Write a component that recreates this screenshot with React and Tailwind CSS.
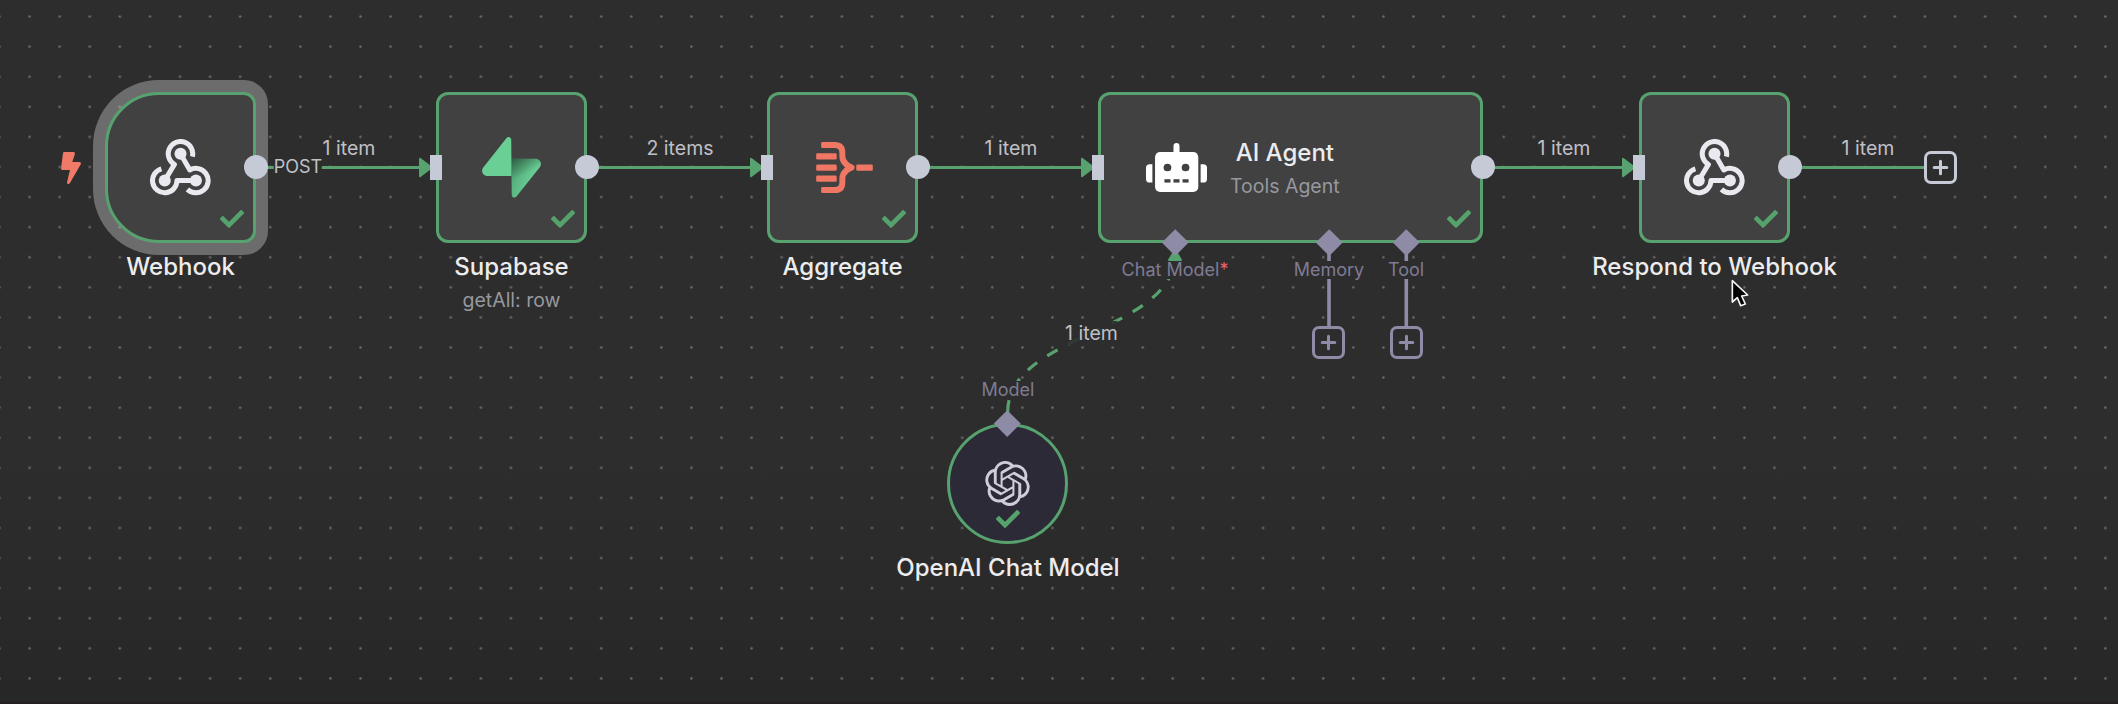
import { FaBolt, FaCheck } from "react-icons/fa";
import { SiOpenai } from "react-icons/si";

const GREEN = "#57a26e";

function Check({ className }) {
  return <FaCheck className={`absolute size-6 text-[#55a26c] ${className}`} />;
}

function OutputHandle() {
  return <span className="absolute top-[63px] -right-[11.5px] size-6 rounded-full bg-[#c6c9d6]" />;
}

function InputHandle() {
  return <span className="absolute top-[63px] -left-[6px] h-[25px] w-3 bg-[#c6c9d6]" />;
}

function Title({ children, className = "" }) {
  return (
    <div className={`text-2xl leading-[31px] font-medium whitespace-nowrap text-[#ececee] ${className}`}>
      {children}
    </div>
  );
}

function Node({ className, shape = "rounded-xl", width = "w-[151px]", title, subtitle, input = true, children }) {
  return (
    <div className={`absolute ${className} ${width}`}>
      <div className={`relative flex h-[151px] items-center justify-center border-[3px] border-[#57a26e] bg-[#414141] ${shape}`}>
        {children}
      </div>
      {input && <InputHandle />}
      <OutputHandle />
      <Check className="top-[115px] right-[12px]" />
      {title && (
        <div className="absolute top-[159px] left-1/2 flex -translate-x-1/2 flex-col items-center">
          <Title>{title}</Title>
          {subtitle && <div className="mt-[3px] text-[19.5px] leading-[30px] whitespace-nowrap text-[#97979f]">{subtitle}</div>}
        </div>
      )}
    </div>
  );
}

function WebhookIcon() {
  return (
    <svg viewBox="0 0 182 170" className="h-[57px] w-[61px]" fill="none" stroke="#e9e9ef" strokeWidth="15">
      <path d="M44 124 L72.8 75.6 A36.5 36.5 0 1 1 126.4 52.8" strokeLinejoin="round" />
      <path d="M91 44 L118.8 92.4 A36.5 36.5 0 1 1 111.6 150.3" strokeLinejoin="round" />
      <path d="M137 124 L80.5 124 A36.5 36.5 0 1 1 34 88.9" strokeLinejoin="round" />
      <g fill="#e9e9ef" stroke="none">
        <circle cx="91" cy="44" r="18" />
        <circle cx="44" cy="124" r="18" />
        <circle cx="137" cy="124" r="18" />
      </g>
    </svg>
  );
}

function SupabaseIcon() {
  return (
    <svg viewBox="0 0 109 113" className="h-[61px] w-[59px]">
      <defs>
        <linearGradient id="bolt" x1="54" y1="55" x2="94" y2="72" gradientUnits="userSpaceOnUse">
          <stop stopColor="#4fa374" />
          <stop offset="1" stopColor="#68cd93" />
        </linearGradient>
        <linearGradient id="fade" x1="48" y1="30" x2="70" y2="74" gradientUnits="userSpaceOnUse">
          <stop stopOpacity="0.55" />
          <stop offset="1" stopOpacity="0" />
        </linearGradient>
      </defs>
      <path fill="url(#bolt)" d="M63.7076 110.284C60.8481 113.885 55.0502 111.912 54.9813 107.314L53.9738 40.0627L99.1935 40.0627C107.384 40.0627 111.952 49.5228 106.859 55.9374L63.7076 110.284Z" />
      <path fill="url(#fade)" d="M63.7076 110.284C60.8481 113.885 55.0502 111.912 54.9813 107.314L53.9738 40.0627L99.1935 40.0627C107.384 40.0627 111.952 49.5228 106.859 55.9374L63.7076 110.284Z" />
      <path fill="#6acf94" d="M45.317 2.07103C48.1765 -1.53037 53.9745 0.442937 54.0434 5.041L54.4849 72.2922H9.83113C1.64038 72.2922 -2.92775 62.8321 2.1655 56.4175L45.317 2.07103Z" />
    </svg>
  );
}

function AggregateIcon() {
  return (
    <svg viewBox="0 0 171 154" className="ml-1 h-[51px] w-[57px]" fill="#ef7763">
      <rect x="0" y="34" width="62" height="19" rx="4" />
      <rect x="0" y="68" width="62" height="19" rx="4" />
      <rect x="0" y="101" width="62" height="19" rx="4" />
      <rect x="121" y="68" width="50" height="19" rx="4" />
      <path
        d="M19 9 H56 Q79 9 79 32 V44 Q79 57 91 68 Q98 73 107 77 Q98 81 91 86 Q79 97 79 110 V122 Q79 145 56 145 H19"
        fill="none"
        stroke="#ef7763"
        strokeWidth="18"
        strokeLinecap="butt"
        strokeLinejoin="round"
      />
      <rect x="15" y="0" width="12" height="18" rx="4" />
      <rect x="15" y="136" width="12" height="18" rx="4" />
    </svg>
  );
}

function RobotIcon() {
  return (
    <svg viewBox="0 0 182 146" className="h-[49px] w-[61px]" fill="#fff">
      <rect x="82" y="0" width="18" height="40" rx="9" />
      <rect x="27" y="27" width="129" height="119" rx="15" />
      <path d="M19 63 V118 H11 A11 11 0 0 1 0 107 V74 A11 11 0 0 1 11 63Z" />
      <path d="M163 63 V118 H171 A11 11 0 0 0 182 107 V74 A11 11 0 0 0 171 63Z" />
      <g fill="#414141">
        <circle cx="64" cy="73" r="11.5" />
        <circle cx="118" cy="73" r="11.5" />
        <rect x="55" y="108" width="18" height="10" />
        <rect x="82" y="108" width="18" height="10" />
        <rect x="109" y="108" width="18" height="10" />
      </g>
    </svg>
  );
}

function Diamond({ className }) {
  return <span className={`absolute size-[18.5px] rotate-45 bg-[#8d8ba5] ${className}`} />;
}

function EdgeLabel({ className, size = "text-[19.5px]", children }) {
  return (
    <span className={`absolute -translate-x-1/2 leading-6 whitespace-nowrap text-[#c0c0c7] ${size} ${className}`}>
      {children}
    </span>
  );
}

function PortLabel({ className, children }) {
  return (
    <span className={`absolute -translate-x-1/2 bg-[#2d2d2d] text-lg leading-[18px] whitespace-nowrap text-[#7f7b94] ${className}`}>
      {children}
    </span>
  );
}

function AddButton({ className }) {
  return (
    <button className={`absolute flex size-[33px] items-center justify-center rounded-[7px] border-[3px] border-current bg-[#2d2d2d] ${className}`}>
      <svg viewBox="0 0 17 17" className="size-[17px]" fill="none" stroke="currentColor" strokeWidth="3" strokeLinecap="round">
        <path d="M8.5 2.2V14.8M2.2 8.5H14.8" />
      </svg>
    </button>
  );
}

const arrows = [419.5, 750.5, 1081.5, 1622.5];

function Edges() {
  return (
    <svg className="absolute inset-0 h-[704px] w-[2118px]" fill="none">
      <g stroke={GREEN} strokeWidth="3.2">
        <path d="M256 167.5H424M587 167.5H755M918 167.5H1086M1483 167.5H1627M1790 167.5H1924" />
        <path d="M1007.7 412C1007.7 333 1175 333 1175 254" strokeDasharray="12 12" />
      </g>
      <g fill={GREEN} stroke={GREEN} strokeWidth="2" strokeLinejoin="round">
        {arrows.map((x) => (
          <path key={x} d={`M${x + 0.5} 158.7L${x + 12} 167.5L${x + 0.5} 176.3Z`} />
        ))}
        <path d="M1175 250L1181 260H1169Z" />
      </g>
      <path d="M1329 250V326M1406.3 250V326" stroke="#8d8ba5" strokeWidth="3.6" />
    </svg>
  );
}

export default function App() {
  return (
    <main className="relative h-[704px] w-[2118px] overflow-hidden border-b-2 border-[#231f22] bg-linear-to-b from-[#2d2d2d] from-65% to-[#272727] font-['Inter',sans-serif]">
      <svg className="absolute inset-0 h-[704px] w-[2118px]">
        <defs>
          <pattern id="grid" x="-15.5" y="1.5" width="30.085" height="30.085" patternUnits="userSpaceOnUse">
            <circle cx="15" cy="15" r="1.25" fill="#6c6c6c" />
          </pattern>
        </defs>
        <rect width="2118" height="702" fill="url(#grid)" />
      </svg>

      <div className="absolute top-20 left-[93px] h-[175px] w-[175px] rounded-l-[66px] rounded-r-3xl bg-white/30" />
      <Edges />

      <FaBolt className="absolute top-[151.5px] left-[55px] h-8 w-8 text-[#ee7a67]" />

      <Node className="top-[92px] left-[105px]" shape="rounded-l-[54px] rounded-r-xl" title="Webhook" input={false}>
        <WebhookIcon />
      </Node>
      <Node className="top-[92px] left-[436px]" title="Supabase" subtitle="getAll: row">
        <SupabaseIcon />
      </Node>
      <Node className="top-[92px] left-[767px]" title="Aggregate">
        <AggregateIcon />
      </Node>
      <Node className="top-[92px] left-[1098px]" width="w-[385px]">
        <div className="flex w-full items-center gap-[23px] pl-[45px]">
          <RobotIcon />
          <div className="flex flex-col items-center pt-0.5">
            <Title>AI Agent</Title>
            <div className="mt-[3px] text-[19.5px] leading-[30px] text-[#97979f]">Tools Agent</div>
          </div>
        </div>
      </Node>
      <Node className="top-[92px] left-[1639px]" title="Respond to Webhook">
        <WebhookIcon />
      </Node>

      <div className="absolute top-[423px] left-[947px] flex size-[121px] items-center justify-center rounded-full border-[3px] border-[#57a26e] bg-[#2c2a37]">
        <SiOpenai className="size-[45px] text-[#cfcdd9]" />
        <Check className="top-[81px] left-[46px]" />
      </div>
      <Title className="absolute top-[552px] left-[1008px] -translate-x-1/2">OpenAI Chat Model</Title>

      <Diamond className="top-[233.2px] left-[1165.5px]" />
      <Diamond className="top-[233.2px] left-[1319.5px]" />
      <Diamond className="top-[233.2px] left-[1396.8px]" />
      <Diamond className="top-[414.2px] left-[998.3px]" />

      <PortLabel className="top-[261px] left-[1175px]">
        Chat Model<span className="text-[#e8636b]">*</span>
      </PortLabel>
      <PortLabel className="top-[261px] left-[1329px]">Memory</PortLabel>
      <PortLabel className="top-[261px] left-[1406px]">Tool</PortLabel>
      <PortLabel className="top-[381px] left-[1008px]">Model</PortLabel>

      <EdgeLabel size="text-lg" className="top-[155px] left-[298px] bg-[#2d2d2d] text-[#b4b4ba]">POST</EdgeLabel>
      <EdgeLabel className="top-[136px] left-[349px]">1 item</EdgeLabel>
      <EdgeLabel className="top-[136px] left-[680px]">2 items</EdgeLabel>
      <EdgeLabel className="top-[136px] left-[1011px]">1 item</EdgeLabel>
      <EdgeLabel className="top-[136px] left-[1564px]">1 item</EdgeLabel>
      <EdgeLabel className="top-[136px] left-[1868px]">1 item</EdgeLabel>
      <EdgeLabel className="top-[321px] left-[1091.5px] bg-[#2d2d2d]/90">1 item</EdgeLabel>

      <AddButton className="top-[325.5px] left-[1312px] text-[#8d8ba5]" />
      <AddButton className="top-[325.5px] left-[1389.5px] text-[#8d8ba5]" />
      <AddButton className="top-[151px] left-[1923.5px] text-[#c6c9d6]" />

      <svg viewBox="0 0 54 84" className="absolute top-[279px] left-[1731px] h-7 w-[18px]" fill="#000" stroke="#f4f4f4" strokeWidth="5" strokeLinejoin="round">
        <path d="M4 5L50 48L32 51L43 75L29 80L19 56L4 69Z" />
      </svg>
    </main>
  );
}
